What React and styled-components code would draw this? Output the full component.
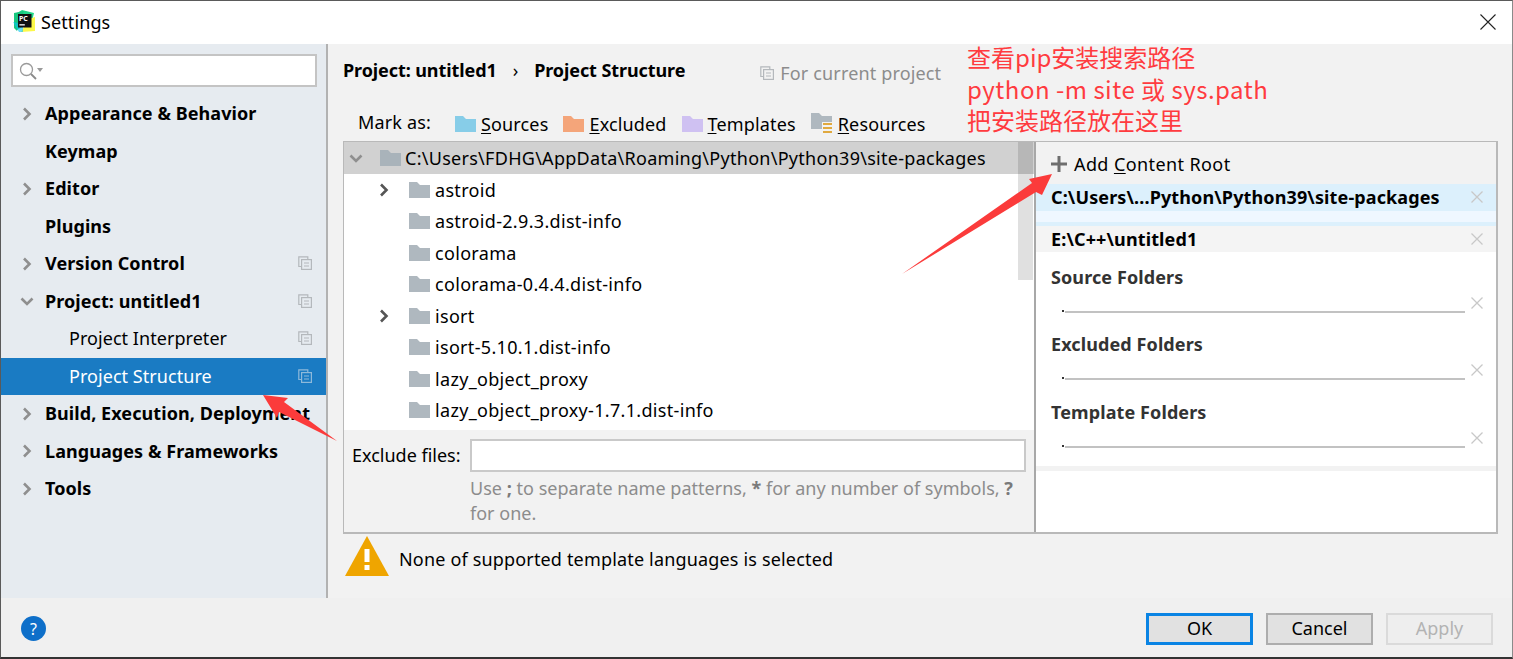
import React from 'react'
import styled, { createGlobalStyle } from 'styled-components'

const Global = createGlobalStyle`
  html, body { margin: 0; height: 100%; overflow: hidden; background: #f2f2f2; }
  #root { height: 659px; }
  * { box-sizing: border-box; }
  u { text-underline-offset: 2px; }
`

const Window = styled.div`
  position: relative;
  width: 1513px;
  height: 659px;
  display: flex;
  flex-direction: column;
  overflow: hidden;
  background: #f2f2f2;
  color: #000;
  font-family: 'Noto Sans', 'Noto Sans CJK SC', sans-serif;
  font-size: 18px;
  border: 1px solid #5a5a5a;
  border-right-color: #8a8a8a;
  border-bottom-width: 2px;
  border-bottom-color: #333;
`
const TitleBar = styled.div`
  height: 43px;
  flex: none;
  background: #fff;
  display: flex;
  align-items: center;
  padding: 0 16px 2px 12px;
  gap: 5px;
  font-size: 18px;
`
const TitleText = styled.span`
  flex: 1;
  letter-spacing: 0.1px;
`
const Content = styled.div`
  flex: 1;
  min-height: 0;
  display: flex;
`
const Sidebar = styled.div`
  width: 325px;
  flex: none;
  background: #e6ebf0;
`
const Divider = styled.div`
  width: 2px;
  flex: none;
  background: #b2b2b2;
`
const Search = styled.div`
  height: 33px;
  margin: 10px 9px 8px 10px;
  background: #fff;
  border: 2px solid #c4c4c4;
  display: flex;
  align-items: center;
  padding-left: 6px;
`
const NavRow = styled.div`
  height: 37.5px;
  display: flex;
  align-items: center;
  position: relative;
  padding: 0 14px 1px ${({ $child }) => ($child ? 68 : 44)}px;
  background: ${({ $selected }) => ($selected ? '#1a7bc3' : 'transparent')};
  color: ${({ $selected }) => ($selected ? '#fff' : '#000')};
  font-weight: ${({ $child }) => ($child ? 400 : 700)};
  white-space: nowrap;
  letter-spacing: ${({ $child }) => ($child ? '0.05px' : '0.07px')};
`
const NavChevron = styled.span`
  position: absolute;
  left: 19px;
  top: 11.5px;
  display: flex;
`
const NavLabel = styled.span`
  flex: 1;
`
const Main = styled.div`
  flex: 1;
  min-width: 0;
  display: flex;
  flex-direction: column;
  padding-left: 15px;
`
const Crumbs = styled.div`
  height: 62px;
  padding: 14px 0 0 0;
  display: flex;
  align-items: flex-start;
  font-weight: 700;
  letter-spacing: -0.09px;
  white-space: nowrap;
`
const CrumbSep = styled.span`
  margin: 0 16px 0 16px;
  font-weight: 400;
  font-size: 18px;
  line-height: 24px;
`
const Scope = styled.span`
  display: flex;
  align-items: center;
  gap: 6px;
  margin-left: 75px;
  padding-top: 3px;
  font-weight: 400;
  color: #8c8c8c;
  letter-spacing: 0.15px;
`
const MarkRow = styled.div`
  height: 35px;
  display: flex;
  align-items: flex-start;
  padding: 4px 0 0 15px;
  white-space: nowrap;
  letter-spacing: 0.15px;
`
const MarkLabel = styled.span`
  width: 97px;
  line-height: 24px;
`
const MarkItem = styled.span`
  display: flex;
  align-items: center;
  gap: 5px;
  margin-right: 15px;
  padding-top: 2px;
  line-height: 24px;
`
const Panel = styled.div`
  width: 1155px;
  height: 393px;
  flex: none;
  display: flex;
  border: 1px solid #b9b9b9;
  border-bottom-width: 2px;
  border-right-width: 2px;
`
const TreeColumn = styled.div`
  width: 690px;
  flex: none;
  display: flex;
  flex-direction: column;
  position: relative;
`
const Tree = styled.div`
  height: 288px;
  flex: none;
  background: #fff;
  overflow: hidden;
`
const TreeHead = styled.div`
  height: 32px;
  background: #d1d1d1;
  display: flex;
  align-items: center;
  padding-left: 5px;
  gap: 4px;
  letter-spacing: 0.28px;
  white-space: nowrap;
  & > svg:first-child { margin-right: 13px; }
`
const TreeRow = styled.div`
  height: 31.5px;
  display: flex;
  align-items: center;
  position: relative;
  padding-left: 65px;
  gap: 5px;
  white-space: nowrap;
  letter-spacing: 0.32px;
`
const TreeChevron = styled.span`
  position: absolute;
  left: 33px;
  top: 9px;
  display: flex;
`
const Scrollbar = styled.div`
  position: absolute;
  top: 0;
  right: 1px;
  width: 15px;
  height: 138px;
  background: #000;
  opacity: 0.12;
`
const ExcludeRow = styled.div`
  flex: 1;
  padding: 9px 8px 0 8px;
  display: grid;
  grid-template-columns: 118px 1fr;
  grid-auto-rows: min-content;
`
const ExcludeLabel = styled.span`
  line-height: 32px;
`
const ExcludeInput = styled.div`
  height: 33px;
  background: #fff;
  border: 2px solid #c9c9c9;
`
const Hint = styled.div`
  grid-column: 2;
  color: #8c8c8c;
  line-height: 25px;
  padding-top: 4px;
  font-size: 18px;
  letter-spacing: 0.02px;
  b { color: #7a7a7a; }
`
const RootsColumn = styled.div`
  flex: 1;
  min-width: 0;
  background: #fff;
  border-left: 2px solid #a8a8a8;
  display: flex;
  flex-direction: column;
`
const AddRoot = styled.div`
  height: 42px;
  flex: none;
  background: #f2f2f2;
  display: flex;
  align-items: center;
  gap: 7px;
  padding: 1px 0 0 15px;
  letter-spacing: 0.4px;
`
const RootRow = styled.div`
  height: ${({ $selected }) => ($selected ? 42 : 26)}px;
  flex: none;
  position: relative;
  padding: 0 0 0 15px;
  font-weight: 700;
  line-height: 26px;
  letter-spacing: 0.12px;
  white-space: nowrap;
  background: ${({ $selected }) =>
    $selected
      ? 'linear-gradient(#dcf0fc 0 27px, #eff7ff 27px 38px, #dcf0fc 38px)'
      : '#f4f4f4'};
`
const RemoveIcon = styled.span`
  position: absolute;
  right: 13px;
  top: ${({ $top }) => $top}px;
  display: flex;
`
const FolderGroup = styled.div`
  height: ${({ $h }) => $h}px;
  flex: none;
  position: relative;
  padding: 13px 0 0 15px;
  font-weight: 700;
  color: #333;
  line-height: 25px;
  letter-spacing: 0.1px;
`
const FolderLine = styled.div`
  position: absolute;
  left: 29px;
  right: 31px;
  top: 59px;
  height: 2px;
  background: #c2c2c2;
  &::before {
    content: '';
    position: absolute;
    left: -3px;
    top: -1px;
    width: 2px;
    height: 2px;
    background: #333;
  }
`
const RootsBand = styled.div`
  height: 5px;
  flex: none;
  background: #f2f2f2;
`
const Warning = styled.div`
  flex: 1;
  display: flex;
  align-items: flex-start;
  gap: 10px;
  padding: 2px 0 0 2px;
  letter-spacing: 0.17px;
`
const WarningText = styled.span`
  line-height: 46px;
`
const Footer = styled.div`
  height: 59px;
  flex: none;
  background: #f0f0f0;
  display: flex;
  align-items: flex-start;
  padding: 15px 19px 0 20px;
  gap: 13px;
`
const Help = styled.div`
  width: 25px;
  height: 25px;
  margin: 3px auto 0 0;
  border-radius: 50%;
  background: #0e6fc9;
  color: #fff;
  font-weight: 400;
  font-size: 16px;
  display: flex;
  align-items: center;
  justify-content: center;
`
const Button = styled.div`
  width: 107px;
  height: 32px;
  padding: 0 0 2px 0;
  display: flex;
  align-items: center;
  justify-content: center;
  background: ${({ $disabled }) => ($disabled ? '#eeeeee' : '#e1e1e1')};
  color: ${({ $disabled }) => ($disabled ? '#b3b3b3' : '#000')};
  border: ${({ $primary }) => ($primary ? 3 : 2)}px solid
    ${({ $primary, $disabled }) =>
      $primary ? '#0a84e4' : $disabled ? '#dadada' : '#adadad'};
`
const Note = styled.div`
  position: absolute;
  left: 966px;
  top: 40px;
  color: #ff3b3f;
  font-family: 'Noto Sans CJK SC', 'Noto Sans', sans-serif;
  font-size: 24px;
  line-height: 31.5px;
  white-space: nowrap;
`
const NoteLatin = styled.span`
  letter-spacing: 0.5px;
`
const Arrows = styled.svg`
  position: absolute;
  left: -1px;
  top: -1px;
  pointer-events: none;
`

const Chevron = ({ down, color = '#8f8f8f', stroke = 2.6 }) =>
  down ? (
    <svg width="14" height="14" viewBox="0 0 14 14" fill="none">
      <path d="M1.5 4.5 7 10l5.5-5.5" stroke={color} strokeWidth={stroke} />
    </svg>
  ) : (
    <svg width="14" height="14" viewBox="0 0 14 14" fill="none">
      <path d="M4 1.500 9.500 7 4 12.500" stroke={color} strokeWidth={stroke} />
    </svg>
  )

const CopyIcon = ({ color = '#b4b8bc' }) => (
  <svg width="14" height="14" viewBox="0 0 14 14" fill="none" stroke={color} strokeWidth="1.2">
    <path d="M3 10.500H.8V.8h9V3" />
    <rect x="3.600" y="3.600" width="9.800" height="9.800" />
    <path d="M6 7h5M6 10h5" />
  </svg>
)

const Folder = ({ color = '#afb8bf', width = 21, height = 16 }) => (
  <svg width={width} height={height} viewBox="0 0 21 16">
    <path d="M0 0h8l3 3h10v13H0z" fill={color} />
  </svg>
)

const Remove = () => (
  <svg width="12" height="12" viewBox="0 0 12 12" stroke="#c8c8c8" strokeWidth="1.300">
    <path d="M.5.5l11 11M11.500.5l-11 11" />
  </svg>
)

const Logo = () => (
  <svg width="23" height="23" viewBox="0 0 23 23">
    <path d="M1 5 9 0l12 3-2 8-15 9z" fill="#21d789" />
    <path d="M1 3l10-2-7 20-3-3z" fill="#18c77f" />
    <path d="M8 22l14-1 0-14-6 2z" fill="#fcf84a" />
    <path d="M0 12l6 10 4 0 0-8z" fill="#07c3f2" opacity=".6" />
    <rect x="5" y="4" width="13.500" height="13.500" fill="#111" />
    <text x="6" y="11" fill="#fff" fontSize="7" fontWeight="700" fontFamily="Noto Sans">PC</text>
    <rect x="6.400" y="14.200" width="5.400" height="1.300" fill="#fff" />
  </svg>
)

const navItems = [
  { label: 'Appearance & Behavior', arrow: true },
  { label: 'Keymap' },
  { label: 'Editor', arrow: true },
  { label: 'Plugins' },
  { label: 'Version Control', arrow: true, copy: true },
  { label: 'Project: untitled1', open: true, copy: true },
  { label: 'Project Interpreter', child: true, copy: true },
  { label: 'Project Structure', child: true, copy: true, selected: true },
  { label: 'Build, Execution, Deployment', arrow: true },
  { label: 'Languages & Frameworks', arrow: true },
  { label: 'Tools', arrow: true }
]

const treeItems = [
  { name: 'astroid', arrow: true },
  { name: 'astroid-2.9.3.dist-info' },
  { name: 'colorama' },
  { name: 'colorama-0.4.4.dist-info' },
  { name: 'isort', arrow: true },
  { name: 'isort-5.10.1.dist-info' },
  { name: 'lazy_object_proxy' },
  { name: 'lazy_object_proxy-1.7.1.dist-info' }
]

const folderGroups = [
  { title: 'Source Folders', height: 67 },
  { title: 'Excluded Folders', height: 68 },
  { title: 'Template Folders', height: 79 }
]

export default function App() {
  return (
    <Window>
      <Global />
      <TitleBar>
        <Logo />
        <TitleText>Settings</TitleText>
        <svg width="16" height="16" viewBox="0 0 16 16" stroke="#222" strokeWidth="1.100">
          <path d="M.5.5l15 15M15.500.5l-15 15" />
        </svg>
      </TitleBar>
      <Content>
        <Sidebar>
          <Search>
            <svg width="24" height="18" viewBox="0 0 24 18" fill="none">
              <circle cx="7.500" cy="7.500" r="6" stroke="#9a9a9a" strokeWidth="1.300" />
              <path d="M12 12l5 5" stroke="#8a8a8a" strokeWidth="1.800" />
              <path d="M18 6h6l-3 4z" fill="#9a9a9a" />
            </svg>
          </Search>
          {navItems.map(({ label, arrow, open, child, copy, selected }) => (
            <NavRow key={label} $child={child} $selected={selected}>
              {(arrow || open) && (
                <NavChevron>
                  <Chevron down={open} />
                </NavChevron>
              )}
              <NavLabel>{label}</NavLabel>
              {copy && <CopyIcon color={selected ? '#8db9da' : '#b4b8bc'} />}
            </NavRow>
          ))}
        </Sidebar>
        <Divider />
        <Main>
          <Crumbs>
            Project: untitled1
            <CrumbSep>›</CrumbSep>
            Project Structure
            <Scope>
              <CopyIcon />
              For current project
            </Scope>
          </Crumbs>
          <MarkRow>
            <MarkLabel>Mark as:</MarkLabel>
            <MarkItem>
              <Folder color="#87cde8" />
              <span><u>S</u>ources</span>
            </MarkItem>
            <MarkItem>
              <Folder color="#f4a57a" />
              <span><u>E</u>xcluded</span>
            </MarkItem>
            <MarkItem>
              <Folder color="#cfc1f2" />
              <span><u>T</u>emplates</span>
            </MarkItem>
            <MarkItem>
              <svg width="22" height="22" viewBox="0 0 22 22">
                <path d="M0 0h8l3 3h10v13H0z" fill="#afb8bf" />
                <rect x="11" y="9" width="11" height="13" fill="#f2f2f2" />
                <path d="M12 10h9v2h-9zM12 14h9v2h-9zM12 18h9v2h-9z" fill="#e0a93f" />
              </svg>
              <span><u>R</u>esources</span>
            </MarkItem>
          </MarkRow>
          <Panel>
            <TreeColumn>
              <Tree>
                <TreeHead>
                  <Chevron down />
                  <Folder color="#a9b3ba" />
                  C:\Users\FDHG\AppData\Roaming\Python\Python39\site-packages
                </TreeHead>
                {treeItems.map(({ name, arrow }) => (
                  <TreeRow key={name}>
                    {arrow && (
                      <TreeChevron>
                        <Chevron color="#555" />
                      </TreeChevron>
                    )}
                    <Folder />
                    {name}
                  </TreeRow>
                ))}
              </Tree>
              <Scrollbar />
              <ExcludeRow>
                <ExcludeLabel>Exclude files:</ExcludeLabel>
                <ExcludeInput />
                <Hint>
                  Use <b>;</b> to separate name patterns, <b>*</b> for any number of symbols, <b>?</b> for one.
                </Hint>
              </ExcludeRow>
            </TreeColumn>
            <RootsColumn>
              <AddRoot>
                <svg width="16" height="16" viewBox="0 0 16 16">
                  <path d="M6.500 0h3v6.500H16v3H9.500V16h-3V9.500H0v-3h6.500z" fill="#6e6e6e" />
                </svg>
                <span>Add <u>C</u>ontent Root</span>
              </AddRoot>
              <RootRow $selected>
                C:\Users\...Python\Python39\site-packages
                <RemoveIcon $top={7}><Remove /></RemoveIcon>
              </RootRow>
              <RootRow>
                E:\C++\untitled1
                <RemoveIcon $top={7}><Remove /></RemoveIcon>
              </RootRow>
              {folderGroups.map(({ title, height }) => (
                <FolderGroup key={title} $h={height}>
                  {title}
                  <FolderLine />
                  <RemoveIcon $top={45}><Remove /></RemoveIcon>
                </FolderGroup>
              ))}
              <RootsBand />
            </RootsColumn>
          </Panel>
          <Warning>
            <svg width="44" height="40" viewBox="0 0 44 40">
              <path d="M22 0l22 40H0z" fill="#efa500" />
              <rect x="19.500" y="13" width="5" height="13" fill="#fff" />
              <rect x="19.500" y="29" width="5" height="5" fill="#fff" />
            </svg>
            <WarningText>None of supported template languages is selected</WarningText>
          </Warning>
        </Main>
      </Content>
      <Footer>
        <Help>?</Help>
        <Button $primary>OK</Button>
        <Button>Cancel</Button>
        <Button $disabled>Apply</Button>
      </Footer>
      <Note>
        查看pip安装搜索路径
        <br />
        <NoteLatin>python -m site 或 sys.path</NoteLatin>
        <br />
        把安装路径放在这里
      </Note>
      <Arrows width="1513" height="659" viewBox="0 0 1513 659">
        <path d="M902 274 1032 183 1029 179 1052 174 1042 195 1036 192z" fill="#fb3b3b" />
        <path d="M263 395 288 398 284 402 337 441 279 412 277 418z" fill="#fb3b3b" />
      </Arrows>
    </Window>
  )
}
